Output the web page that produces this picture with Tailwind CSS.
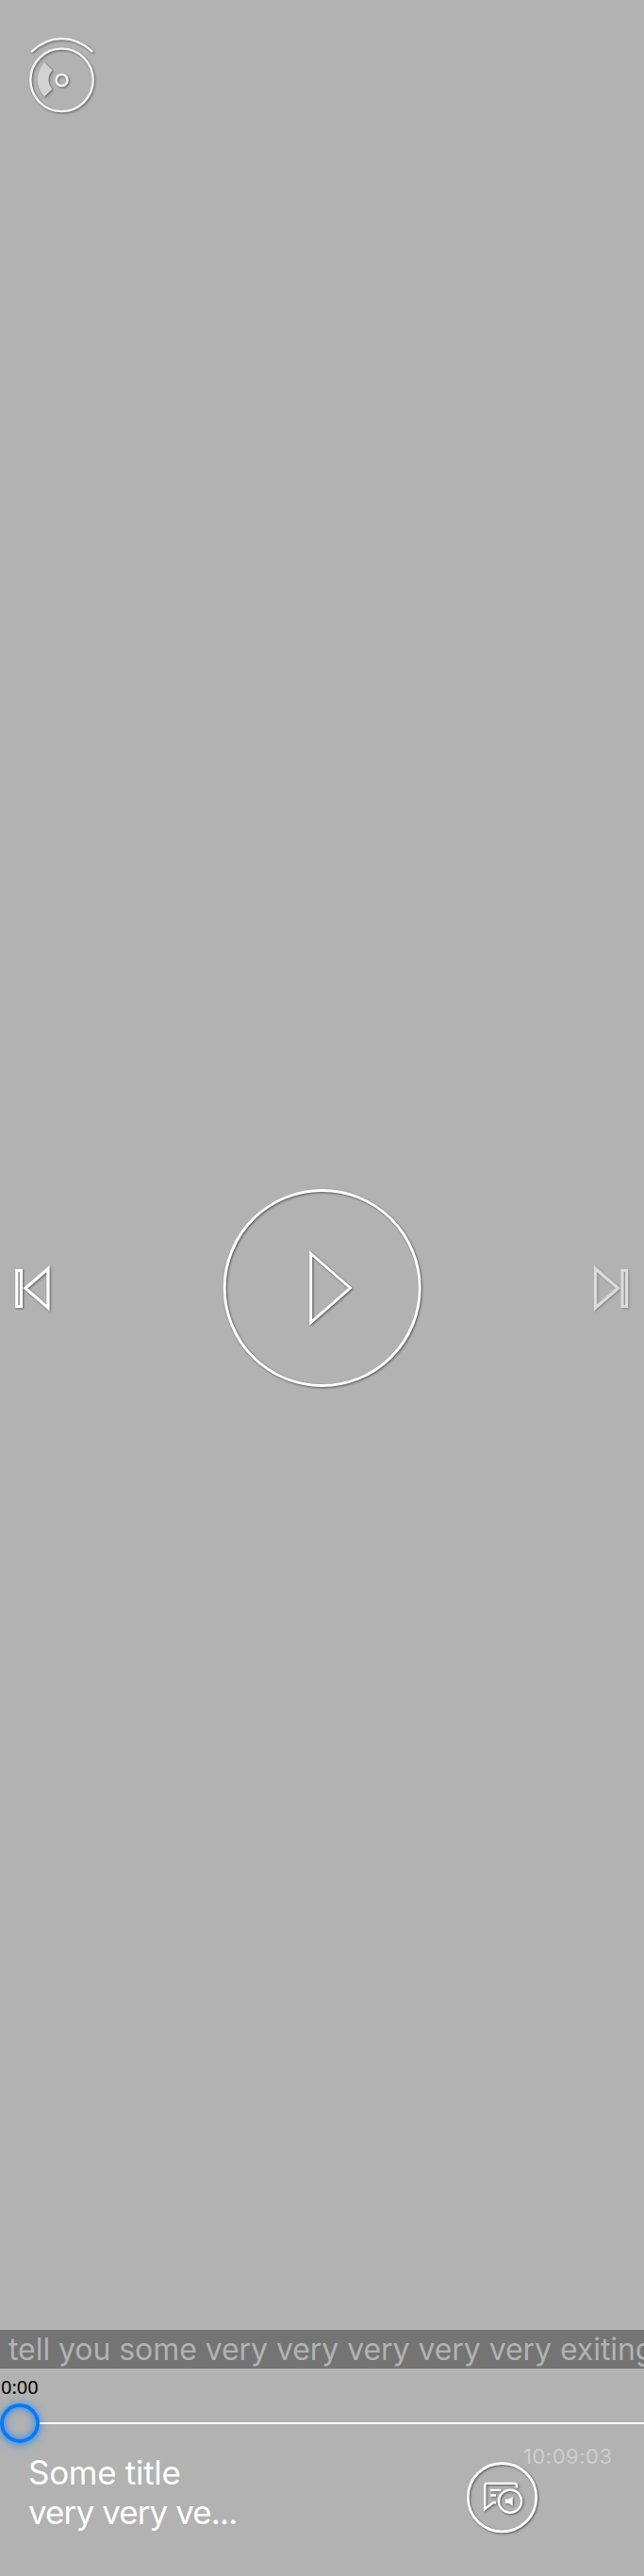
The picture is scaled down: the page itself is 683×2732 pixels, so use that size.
<!DOCTYPE html>
<html lang="en">
<head>
<meta charset="utf-8">
<title>Player</title>
<script src="https://cdn.jsdelivr.net/npm/@tailwindcss/browser@4"></script>
</head>
<body class="bg-[#b2b2b2] font-['Inter',sans-serif] text-white">
<div class="flex h-[2732px] w-[683px] flex-col overflow-hidden">
  <header class="h-[1246px] shrink-0 pt-[30px] pl-[25px]">
    <svg class="h-[100px] w-[85px] drop-shadow-[1px_1px_1px_rgba(0,0,0,0.45)]" viewBox="25 30 85 100" fill="none" stroke="#f2f2f2" stroke-width="2.5">
      <path d="M34 54.3Q48 41 65.5 41T97.5 54.3" stroke-linecap="round"/>
      <circle cx="65.5" cy="84.8" r="33.2"/>
      <circle cx="65.5" cy="85" r="6"/>
      <path d="M47 66.2L55.5 74.5Q47.5 84.5 55.5 94.5L47 102.8Q32 84.5 47 66.2Z" fill="#d2d2d2" stroke="none"/>
    </svg>
  </header>
  <main class="flex h-[240px] shrink-0 items-center justify-between">
    <svg class="h-[70px] w-[66px] drop-shadow-[1px_1px_1px_rgba(0,0,0,0.45)]" viewBox="0 1331 66 70" fill="none" stroke="#fff" stroke-width="3.2">
      <rect x="17.8" y="1347.5" width="4.6" height="38"/>
      <path d="M51 1345.5V1387L27 1366.3Z"/>
    </svg>
    <svg class="h-[240px] w-[240px] drop-shadow-[1px_1px_1px_rgba(0,0,0,0.5)]" viewBox="221.5 1246 240 240" fill="none" stroke="#fff" stroke-width="2.9">
      <circle cx="341.2" cy="1366" r="103.5"/>
      <path d="M329.2 1329.5L371 1366L329.2 1402.5Z"/>
    </svg>
    <svg class="h-[70px] w-[66px] opacity-55 drop-shadow-[1px_1px_1px_rgba(0,0,0,0.45)]" viewBox="617 1331 66 70" fill="none" stroke="#fff" stroke-width="3.2">
      <path d="M631.5 1345.5V1387L655.5 1366.3Z"/>
      <rect x="660" y="1347.5" width="4.6" height="38"/>
    </svg>
  </main>
  <div class="flex-1"></div>
  <div class="h-[41px] shrink-0 overflow-hidden bg-[#747474] pl-[9px] text-[32px] leading-[41px] tracking-[-0.06px] whitespace-nowrap text-[#b2b2b2]">tell you some very very very very very exiting</div>
  <div class="h-[37px] shrink-0 pt-[6px] pl-px font-['Noto_Sans',sans-serif] text-[20px] leading-[27px] text-black">0:00</div>
  <div class="flex h-[42px] shrink-0 items-center">
    <div class="-ml-[0.5px] h-[42px] w-[42px] shrink-0 rounded-full border-4 border-[#007aff] shadow-[0_1px_10px_rgba(0,122,255,0.8),inset_0_0_10px_rgba(0,122,255,0.8)]"></div>
    <div class="ml-[0.5px] h-[2px] flex-1 bg-white"></div>
  </div>
  <footer class="flex h-[141px] shrink-0">
    <div class="w-[485px] pt-[10px] pl-[30px] text-[35px] leading-[42px]">
      <p class="tracking-[-0.3px]">Some title</p>
      <p class="tracking-[-0.9px]">very very ve...</p>
    </div>
    <svg class="mt-[12px] h-[90px] w-[90px] shrink-0 drop-shadow-[1px_1px_1px_rgba(0,0,0,0.5)]" viewBox="485 2603 90 90" fill="none" stroke="#fff" stroke-width="2.5">
      <circle cx="532.5" cy="2648.7" r="36.2" stroke-width="2.8"/>
      <path d="M548 2638.5V2636Q548 2633.7 545.5 2633.7H516.5Q514.2 2633.7 514.2 2636V2661L523 2654.3H526M520 2641H531.3M520 2646.5H526"/>
      <circle cx="541" cy="2652.7" r="12"/>
      <path d="M536 2650.5H539.5L543.7 2647.7V2657.7L539.5 2655H536Z" fill="#fff" stroke="none"/>
    </svg>
    <time class="-ml-[20px] pt-px text-[22px] leading-[27px] tracking-[0.5px] text-[#cecece]">10:09:03</time>
  </footer>
</div>
</body>
</html>
